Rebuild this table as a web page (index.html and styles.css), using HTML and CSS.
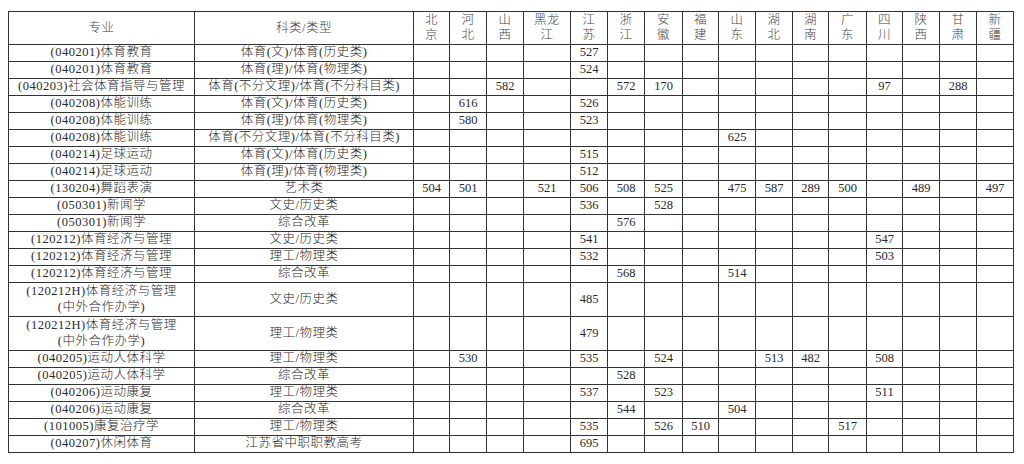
FILE: index.html
```html
<!DOCTYPE html>
<html lang="zh-CN">
<head>
<meta charset="utf-8">
<title>分数表</title>
<link rel="stylesheet" href="styles.css">
</head>
<body>
<table class="scores">
<colgroup>
<col class="c-major"><col class="c-type">
<col class="c36"><col class="c37"><col class="c37"><col class="c47"><col class="c37"><col class="c37"><col class="c38"><col class="c36">
<col class="c37"><col class="c37"><col class="c36"><col class="c38"><col class="c36"><col class="c37"><col class="c37"><col class="c37">
</colgroup>
<thead>
<tr class="head">
<th>专业</th><th>科类/类型</th>
<th>北<br>京</th><th>河<br>北</th><th>山<br>西</th><th>黑龙<br>江</th><th>江<br>苏</th><th>浙<br>江</th><th>安<br>徽</th><th>福<br>建</th>
<th>山<br>东</th><th>湖<br>北</th><th>湖<br>南</th><th>广<br>东</th><th>四<br>川</th><th>陕<br>西</th><th>甘<br>肃</th><th>新<br>疆</th>
</tr>
</thead>
<tbody>
<tr class="row"><td>(040201)体育教育</td><td>体育(文)/体育(历史类)</td><td></td><td></td><td></td><td></td><td>527</td><td></td><td></td><td></td><td></td><td></td><td></td><td></td><td></td><td></td><td></td><td></td></tr>
<tr class="row"><td>(040201)体育教育</td><td>体育(理)/体育(物理类)</td><td></td><td></td><td></td><td></td><td>524</td><td></td><td></td><td></td><td></td><td></td><td></td><td></td><td></td><td></td><td></td><td></td></tr>
<tr class="row"><td>(040203)社会体育指导与管理</td><td>体育(不分文理)/体育(不分科目类)</td><td></td><td></td><td>582</td><td></td><td></td><td>572</td><td>170</td><td></td><td></td><td></td><td></td><td></td><td>97</td><td></td><td>288</td><td></td></tr>
<tr class="row"><td>(040208)体能训练</td><td>体育(文)/体育(历史类)</td><td></td><td>616</td><td></td><td></td><td>526</td><td></td><td></td><td></td><td></td><td></td><td></td><td></td><td></td><td></td><td></td><td></td></tr>
<tr class="row"><td>(040208)体能训练</td><td>体育(理)/体育(物理类)</td><td></td><td>580</td><td></td><td></td><td>523</td><td></td><td></td><td></td><td></td><td></td><td></td><td></td><td></td><td></td><td></td><td></td></tr>
<tr class="row"><td>(040208)体能训练</td><td>体育(不分文理)/体育(不分科目类)</td><td></td><td></td><td></td><td></td><td></td><td></td><td></td><td></td><td>625</td><td></td><td></td><td></td><td></td><td></td><td></td><td></td></tr>
<tr class="row"><td>(040214)足球运动</td><td>体育(文)/体育(历史类)</td><td></td><td></td><td></td><td></td><td>515</td><td></td><td></td><td></td><td></td><td></td><td></td><td></td><td></td><td></td><td></td><td></td></tr>
<tr class="row"><td>(040214)足球运动</td><td>体育(理)/体育(物理类)</td><td></td><td></td><td></td><td></td><td>512</td><td></td><td></td><td></td><td></td><td></td><td></td><td></td><td></td><td></td><td></td><td></td></tr>
<tr class="row"><td>(130204)舞蹈表演</td><td>艺术类</td><td>504</td><td>501</td><td></td><td>521</td><td>506</td><td>508</td><td>525</td><td></td><td>475</td><td>587</td><td>289</td><td>500</td><td></td><td>489</td><td></td><td>497</td></tr>
<tr class="row"><td>(050301)新闻学</td><td>文史/历史类</td><td></td><td></td><td></td><td></td><td>536</td><td></td><td>528</td><td></td><td></td><td></td><td></td><td></td><td></td><td></td><td></td><td></td></tr>
<tr class="row"><td>(050301)新闻学</td><td>综合改革</td><td></td><td></td><td></td><td></td><td></td><td>576</td><td></td><td></td><td></td><td></td><td></td><td></td><td></td><td></td><td></td><td></td></tr>
<tr class="row"><td>(120212)体育经济与管理</td><td>文史/历史类</td><td></td><td></td><td></td><td></td><td>541</td><td></td><td></td><td></td><td></td><td></td><td></td><td></td><td>547</td><td></td><td></td><td></td></tr>
<tr class="row"><td>(120212)体育经济与管理</td><td>理工/物理类</td><td></td><td></td><td></td><td></td><td>532</td><td></td><td></td><td></td><td></td><td></td><td></td><td></td><td>503</td><td></td><td></td><td></td></tr>
<tr class="row"><td>(120212)体育经济与管理</td><td>综合改革</td><td></td><td></td><td></td><td></td><td></td><td>568</td><td></td><td></td><td>514</td><td></td><td></td><td></td><td></td><td></td><td></td><td></td></tr>
<tr class="tall"><td>(120212H)体育经济与管理<br>(中外合作办学)</td><td>文史/历史类</td><td></td><td></td><td></td><td></td><td>485</td><td></td><td></td><td></td><td></td><td></td><td></td><td></td><td></td><td></td><td></td><td></td></tr>
<tr class="tall"><td>(120212H)体育经济与管理<br>(中外合作办学)</td><td>理工/物理类</td><td></td><td></td><td></td><td></td><td>479</td><td></td><td></td><td></td><td></td><td></td><td></td><td></td><td></td><td></td><td></td><td></td></tr>
<tr class="row"><td>(040205)运动人体科学</td><td>理工/物理类</td><td></td><td>530</td><td></td><td></td><td>535</td><td></td><td>524</td><td></td><td></td><td>513</td><td>482</td><td></td><td>508</td><td></td><td></td><td></td></tr>
<tr class="row"><td>(040205)运动人体科学</td><td>综合改革</td><td></td><td></td><td></td><td></td><td></td><td>528</td><td></td><td></td><td></td><td></td><td></td><td></td><td></td><td></td><td></td><td></td></tr>
<tr class="row"><td>(040206)运动康复</td><td>理工/物理类</td><td></td><td></td><td></td><td></td><td>537</td><td></td><td>523</td><td></td><td></td><td></td><td></td><td></td><td>511</td><td></td><td></td><td></td></tr>
<tr class="row"><td>(040206)运动康复</td><td>综合改革</td><td></td><td></td><td></td><td></td><td></td><td>544</td><td></td><td></td><td>504</td><td></td><td></td><td></td><td></td><td></td><td></td><td></td></tr>
<tr class="row"><td>(101005)康复治疗学</td><td>理工/物理类</td><td></td><td></td><td></td><td></td><td>535</td><td></td><td>526</td><td>510</td><td></td><td></td><td></td><td>517</td><td></td><td></td><td></td><td></td></tr>
<tr class="row"><td>(040207)休闲体育</td><td>江苏省中职职教高考</td><td></td><td></td><td></td><td></td><td>695</td><td></td><td></td><td></td><td></td><td></td><td></td><td></td><td></td><td></td><td></td><td></td></tr>
</tbody>
</table>
</body>
</html>
```

FILE: styles.css
```css
html, body {
  background: #ffffff;
}

body {
  margin: 11px 8px 0;
  font-family: "Liberation Serif", "Noto Sans CJK SC", serif;
  font-size: 12.5px;
  font-weight: 300;
  color: #2a2a2a;
}

.scores {
  border-collapse: collapse;
  table-layout: fixed;
  width: 1005px;
}

.c-major { width: 186px; }
.c-type { width: 219px; }
.c36 { width: 36px; }
.c37 { width: 37px; }
.c38 { width: 38px; }
.c47 { width: 47px; }

.scores th,
.scores td {
  border: 1px solid #333333;
  padding: 0;
  text-align: center;
  vertical-align: middle;
  line-height: 15.5px;
  font-weight: 300;
  white-space: nowrap;
  overflow: hidden;
}

.scores td:nth-child(-n+2),
.scores th {
  letter-spacing: 0.5px;
}

.scores th {
  color: #444444;
  line-height: 15px;
}

.head { height: 33px; }
.row { height: 17px; }
.tall { height: 34px; }
```
